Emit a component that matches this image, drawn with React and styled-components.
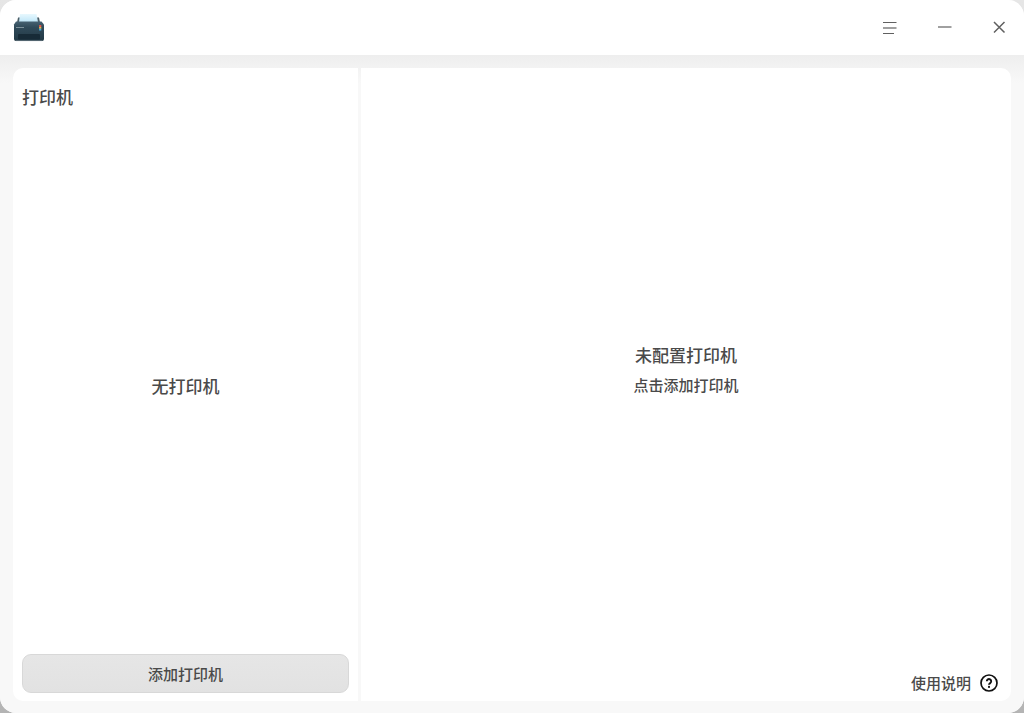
import React from 'react';
import styled, { createGlobalStyle } from 'styled-components';

const App = () => {
  return (
    <>
      <GlobalStyle />
      <Window>
        <TitleBar>
          <PrinterLogo />
          <WindowControls>
            <ControlButton aria-label="菜单">
              <svg width="16" height="16" viewBox="0 0 16 16" stroke="currentColor" fill="none">
                <path d="M1 2.500h13.500M1 13.500h11" />
                <path d="M1 8h13.500" strokeWidth="2" opacity="0.600" />
              </svg>
            </ControlButton>
            <ControlButton aria-label="最小化">
              <svg width="16" height="16" viewBox="0 0 16 16" stroke="currentColor" fill="none">
                <path d="M1 7h13.500" strokeWidth="2" opacity="0.600" />
              </svg>
            </ControlButton>
            <ControlButton aria-label="关闭">
              <svg width="16" height="16" viewBox="0 0 16 16" stroke="currentColor" strokeWidth="1.500" fill="none">
                <path d="M2 2l10.500 10.500M12.500 2l-10.500 10.500" />
              </svg>
            </ControlButton>
          </WindowControls>
        </TitleBar>

        <Content>
          <Sidebar>
            <SidebarTitle>打印机</SidebarTitle>
            <EmptyList>无打印机</EmptyList>
            <AddButton>添加打印机</AddButton>
          </Sidebar>

          <Detail>
            <EmptyState>
              <EmptyTitle>未配置打印机</EmptyTitle>
              <EmptyHint>点击添加打印机</EmptyHint>
            </EmptyState>
            <HelpLink href="#help">
              使用说明
              <HelpIcon />
            </HelpLink>
          </Detail>
        </Content>
      </Window>
    </>
  );
};

export default App;

const PrinterLogo = () => (
  <svg width="32" height="32" viewBox="0 0 32 32" aria-hidden="true">
    <defs>
      <linearGradient id="body" x1="0" y1="0" x2="0" y2="1">
        <stop offset="0" stopColor="#466171" />
        <stop offset="0.300" stopColor="#304a59" />
        <stop offset="1" stopColor="#223945" />
      </linearGradient>
      <linearGradient id="paper" x1="0" y1="0" x2="0" y2="1">
        <stop offset="0" stopColor="#e8f8fe" />
        <stop offset="1" stopColor="#bfe6f8" />
      </linearGradient>
    </defs>
    <path d="M6 5.500h3v5H5zM24 5.500h3l1 5h-4z" fill="#4b5d66" />
    <path d="M8 2h16.500l1.500 8H7z" fill="url(#paper)" />
    <path d="M4 9.500h25.500l2.500 3v14.500a2 2 0 0 1-2 2H4a2 2 0 0 1-2-2V12.500z" fill="url(#body)" />
    <path d="M4 15.500h8" stroke="#8599a2" strokeWidth="0.900" />
    <rect x="6" y="22" width="22" height="5.500" rx="1" fill="#172b37" />
    <path d="M28.200 13v2" stroke="#e1584d" strokeWidth="2.200" />
    <path d="M28.200 15v1.800" stroke="#e5bd4b" strokeWidth="2.200" />
    <path d="M28.200 16.800v1.800" stroke="#4ba9dc" strokeWidth="2.200" />
    <path d="M4 28.600h26" stroke="#718089" strokeWidth="0.700" />
  </svg>
);

const HelpIcon = () => (
  <svg width="18" height="18" viewBox="0 0 18 18" fill="none" stroke="#111" aria-hidden="true">
    <circle cx="9" cy="9" r="8" strokeWidth="1.700" />
    <path d="M6.800 7.300a2.200 2.200 0 1 1 3.400 1.800c-.8.500-1.200.9-1.200 1.700" strokeWidth="1.900" />
    <circle cx="9" cy="12.900" r="1.100" fill="#111" stroke="none" />
  </svg>
);

const GlobalStyle = createGlobalStyle`
  * {
    box-sizing: border-box;
  }

  body {
    margin: 0;
    background: linear-gradient(#e6e6e6, #b4b4b4);
    color: #4a4a4a;
    font-family: "Noto Sans CJK SC", sans-serif;
    font-size: 15px;
    font-weight: 500;
    line-height: 24px;
  }
`;

const Window = styled.div`
  display: flex;
  flex-direction: column;
  min-height: 100vh;
  border-radius: 16px;
  overflow: hidden;
  background-color: #f8f8f8;
`;

const TitleBar = styled.header`
  display: flex;
  align-items: center;
  justify-content: space-between;
  height: 55px;
  padding: 0 12px;
  background-color: #fff;
`;

const WindowControls = styled.div`
  display: flex;
  margin-right: -15px;
`;

const ControlButton = styled.button`
  display: flex;
  align-items: center;
  justify-content: center;
  width: 55px;
  height: 54px;
  padding: 0;
  border: none;
  background: none;
  color: #606060;
  cursor: pointer;
`;

const Content = styled.main`
  flex: 1;
  display: grid;
  grid-template-columns: 345px 1fr;
  gap: 3px;
  padding: 13px 13px 12px;
  background: linear-gradient(#eee, #f8f8f8 28px);
`;

const Panel = styled.section`
  display: flex;
  flex-direction: column;
  background-color: #fff;
`;

const Sidebar = styled(Panel)`
  padding: 17px 9px 8px;
  border-radius: 10px 0 0 10px;
`;

const Detail = styled(Panel)`
  padding: 0 13px 6px;
  border-radius: 0 10px 10px 0;
`;

const SidebarTitle = styled.h1`
  margin: 0;
  font-size: 17px;
  font-weight: 500;
  line-height: 24px;
`;

const EmptyList = styled.div`
  flex: 1;
  display: flex;
  align-items: center;
  justify-content: center;
  padding-top: 8px;
  font-size: 17px;
`;

const AddButton = styled.button`
  height: 39px;
  border: 1px solid #d8d8d8;
  border-radius: 9px;
  background: linear-gradient(#e6e6e6, #e2e2e2);
  color: inherit;
  font: inherit;
  cursor: pointer;
`;

const EmptyState = styled.div`
  flex: 1;
  display: flex;
  flex-direction: column;
  align-items: center;
  justify-content: center;
  gap: 6px;
`;

const EmptyTitle = styled.h2`
  margin: 0;
  font-size: 17px;
  font-weight: 500;
  line-height: 24px;
`;

const EmptyHint = styled.p`
  margin: 0;
`;

const HelpLink = styled.a`
  display: flex;
  align-items: center;
  align-self: flex-end;
  gap: 9px;
  color: inherit;
  text-decoration: none;
`;
